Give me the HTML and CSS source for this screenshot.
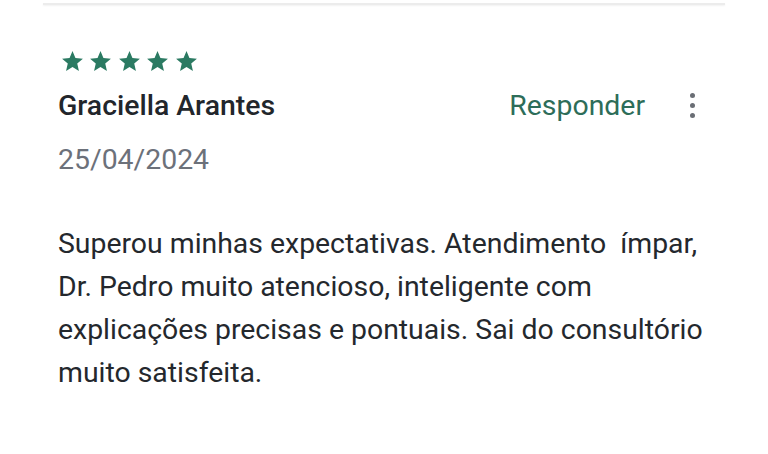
FILE: index.html
```html
<!DOCTYPE html>
<html lang="pt">
<head>
<meta charset="utf-8">
<link rel="stylesheet" href="styles.css">
</head>
<body>
<div class="divider"></div>
<section class="review">
  <div class="stars">
    <svg viewBox="0 0 24 24"><path d="M12 17.27L18.18 21l-1.64-7.03L22 9.24l-7.19-.61L12 2 9.19 8.63 2 9.24l5.46 4.73L5.82 21z"/></svg>
    <svg viewBox="0 0 24 24"><path d="M12 17.27L18.18 21l-1.64-7.03L22 9.24l-7.19-.61L12 2 9.19 8.63 2 9.24l5.46 4.73L5.82 21z"/></svg>
    <svg viewBox="0 0 24 24"><path d="M12 17.27L18.18 21l-1.64-7.03L22 9.24l-7.19-.61L12 2 9.19 8.63 2 9.24l5.46 4.73L5.82 21z"/></svg>
    <svg viewBox="0 0 24 24"><path d="M12 17.27L18.18 21l-1.64-7.03L22 9.24l-7.19-.61L12 2 9.19 8.63 2 9.24l5.46 4.73L5.82 21z"/></svg>
    <svg viewBox="0 0 24 24"><path d="M12 17.27L18.18 21l-1.64-7.03L22 9.24l-7.19-.61L12 2 9.19 8.63 2 9.24l5.46 4.73L5.82 21z"/></svg>
  </div>
  <div class="head">
    <span class="name">Graciella Arantes</span>
    <span class="reply">Responder</span>
    <span class="more"><i></i><i></i><i></i></span>
  </div>
  <div class="date">25/04/2024</div>
  <p class="text">Superou minhas expectativas. Atendimento&nbsp; ímpar, Dr. Pedro muito atencioso, inteligente com explicações precisas e pontuais. Sai do consultório muito satisfeita.</p>
</section>
</body>
</html>
```

FILE: styles.css
```css
html, body {
  margin: 0;
  padding: 0;
  background: #ffffff;
  font-family: Roboto, "Noto Sans", sans-serif;
}
.divider {
  margin: 3px 43px 0 43px;
  height: 2px;
  background: #ececec;
  box-shadow: 0 1px 2px rgba(0, 0, 0, 0.06);
}
.review {
  padding: 44px 0 0 58px;
  width: 670px;
}
.stars {
  display: flex;
  gap: 3.5px;
  margin-left: 1.5px;
}
.stars svg {
  width: 25px;
  height: 25px;
  fill: #2b7a62;
}
.head {
  display: flex;
  align-items: center;
  margin-top: 11px;
  height: 40px;
  padding-right: 33px;
}
.name {
  font-size: 28.4px;
  font-weight: 500;
  color: #22262b;
  flex: 1;
}
.reply {
  font-size: 28.4px;
  color: #2d6d59;
}
.more {
  display: flex;
  flex-direction: column;
  gap: 5px;
  margin-left: 45px;
}
.more i {
  width: 5px;
  height: 5px;
  border-radius: 50%;
  background: #6a6e75;
}
.date {
  font-size: 28.4px;
  color: #6c717a;
  margin-top: 18px;
  line-height: 34px;
}
.text {
  margin: 45px 0 0 0;
  font-size: 28.4px;
  line-height: 43px;
  color: #24282d;
}
```
